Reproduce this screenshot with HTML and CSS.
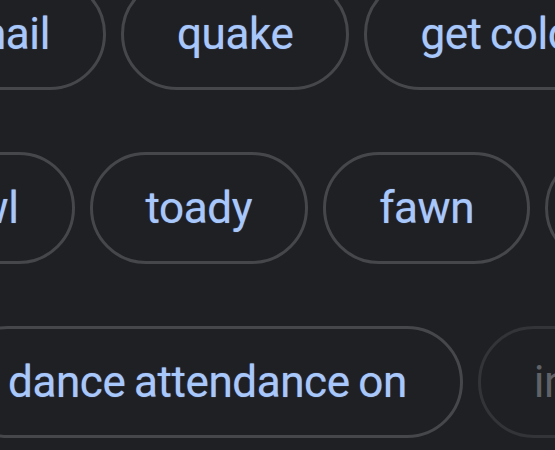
FILE: index.html
```html
<!DOCTYPE html>
<html lang="en">
<head>
<meta charset="utf-8">
<title>Chips</title>
<link rel="stylesheet" href="styles.css">
</head>
<body>
<div class="board">
  <div class="row row-1">
    <span class="chip">hail</span>
    <span class="chip">quake</span>
    <span class="chip">get cold feet</span>
  </div>
  <div class="row row-2">
    <span class="chip">howl</span>
    <span class="chip">toady</span>
    <span class="chip">fawn</span>
    <span class="chip">cringe</span>
  </div>
  <div class="row row-3">
    <span class="chip">dance attendance on</span>
    <span class="chip chip-dim">ingratiate</span>
  </div>
</div>
</body>
</html>
```

FILE: styles.css
```css
html, body {
  margin: 0;
  padding: 0;
  background: #1f2024;
  overflow: hidden;
}
body {
  width: 555px;
  height: 450px;
  font-family: Roboto, "Liberation Sans", sans-serif;
}
.board {
  display: flex;
  flex-direction: column;
  gap: 62px;
  margin-top: -22px;
}
.row {
  display: flex;
  flex-wrap: nowrap;
  gap: 15px;
  white-space: nowrap;
}
.row-1 { margin-left: -74px; }
.row-2 { margin-left: -129px; }
.row-3 { margin-left: -48px; }
.chip {
  flex: none;
  box-sizing: border-box;
  height: 112px;
  padding: 0 53px;
  border: 3px solid #46474b;
  border-radius: 56px;
  display: flex;
  align-items: center;
  color: #a8c7fa;
  font-size: 44px;
  font-weight: 400;
  letter-spacing: -0.4px;
  word-spacing: -2px;
  line-height: 1;
  text-shadow: 0 0 1px rgba(168, 199, 250, 0.6);
}
.chip-dim {
  color: #5f6266;
  border-color: #333438;
  text-shadow: none;
}
```
